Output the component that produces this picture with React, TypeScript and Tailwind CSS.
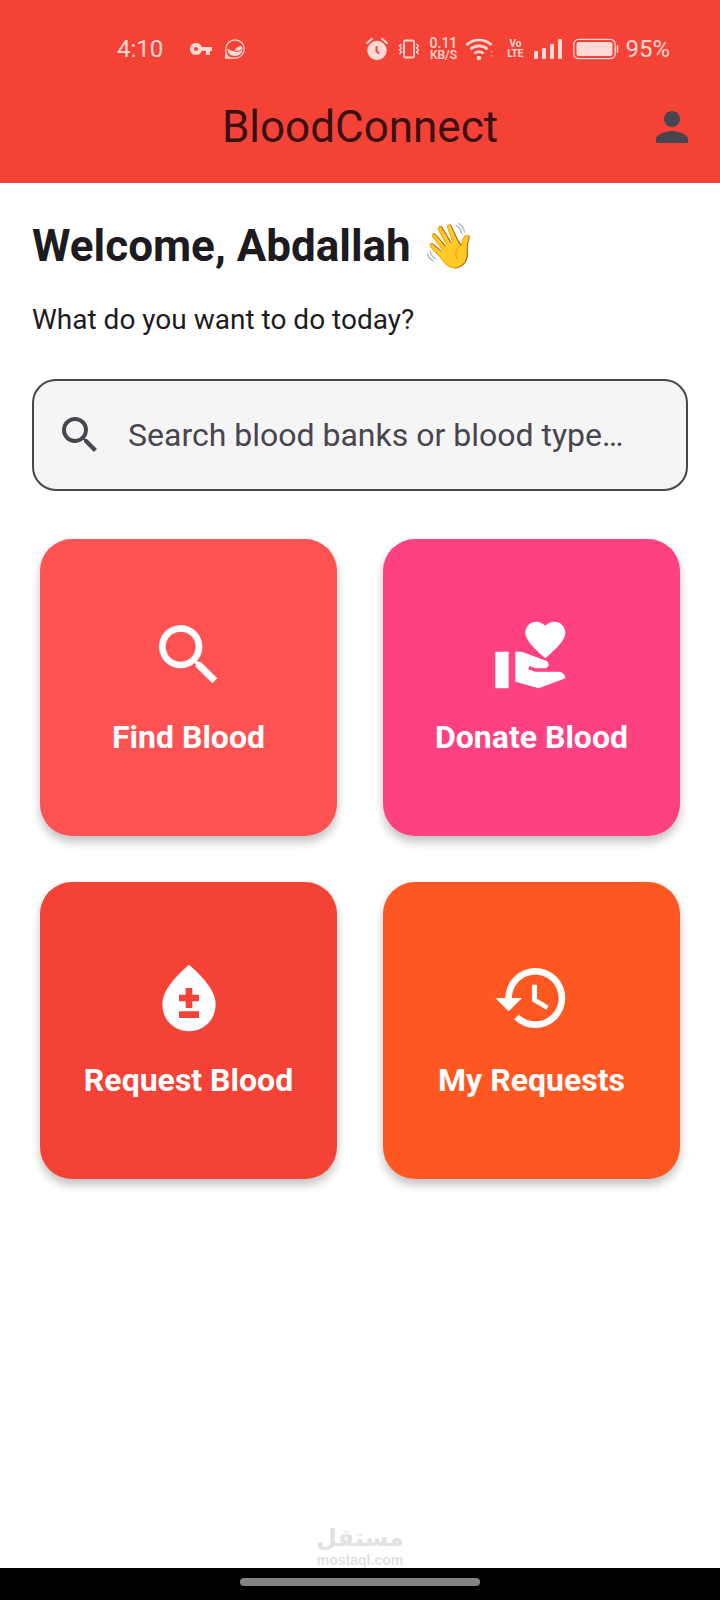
import type { IconType } from "react-icons";
import { MdBloodtype, MdHistory, MdPerson, MdSearch, MdVolunteerActivism, MdVpnKey } from "react-icons/md";

type Action = { label: string; icon: IconType; color: string };

const actions: Action[] = [
  { label: "Find Blood", icon: MdSearch, color: "bg-[#ff5252]" },
  { label: "Donate Blood", icon: MdVolunteerActivism, color: "bg-[#ff4081]" },
  { label: "Request Blood", icon: MdBloodtype, color: "bg-[#f44336]" },
  { label: "My Requests", icon: MdHistory, color: "bg-[#ff5722]" },
];

function ChatBadge() {
  return (
    <svg className="size-5" viewBox="0 0 20 20" fill="none" aria-hidden="true">
      <path d="M.8 19.200V10A9.200 9.200 0 1 1 10 19.200Z" stroke="currentColor" strokeWidth="1.200" />
      <path d="M2.500 9.500c2.500 2.300 5 2.800 7 2.200 1-2.500 4-5.500 7.500-4.200 1.500 5.500-2 9.500-7 9.500s-7.500-3-7.500-7.500Z" fill="currentColor" />
      <path d="M1 12v7h7c-4-.8-6-3-7-7Z" fill="currentColor" />
      <path d="M9 11.800c2.500 1.200 5 1 8-1.300" stroke="#f44336" strokeWidth="1" />
    </svg>
  );
}

function AlarmIcon() {
  return (
    <svg className="h-6 w-[22px]" viewBox="0 0 22 24" fill="none" aria-hidden="true">
      <circle cx="11" cy="13.500" r="9.700" fill="currentColor" />
      <path d="M1.200 6 6 1.800M20.800 6 16 1.800" stroke="currentColor" strokeWidth="2" strokeLinecap="round" />
      <path d="M10.500 10v4l2 2" stroke="#f44336" strokeWidth="2" strokeLinecap="round" />
    </svg>
  );
}

function VibrateIcon() {
  return (
    <svg className="h-5 w-[22px]" viewBox="0 0 22 20" fill="none" stroke="currentColor" aria-hidden="true">
      <rect x="6" y="1.500" width="10" height="17" rx="1.500" strokeWidth="1.800" />
      <path d="m3.500 5-2 2 2 2-2 2 2 2-2 2M18.500 5l2 2-2 2 2 2-2 2 2 2" strokeWidth="1.300" />
    </svg>
  );
}

function WifiIcon() {
  return (
    <svg className="h-6 w-[30px]" viewBox="0 0 30 24" fill="none" stroke="currentColor" aria-hidden="true">
      <path d="M1.500 8a18 18 0 0 1 25 0" strokeWidth="2.600" />
      <path d="M5.500 12.300a12.300 12.300 0 0 1 17 0M9.500 16.500a6.500 6.500 0 0 1 9 0" strokeWidth="2.600" />
      <circle cx="14" cy="21" r="2.300" fill="currentColor" stroke="none" />
      <path d="m24.500 15.500 2-2.500 2 2.500zM24.500 18l2 2.500 2-2.500z" fill="currentColor" stroke="none" opacity=".3" />
    </svg>
  );
}

function SignalIcon() {
  return (
    <svg className="h-5 w-[30px]" viewBox="0 0 30 20" fill="currentColor" aria-hidden="true">
      <rect x="1" y="12" width="4" height="8" rx="1" />
      <rect x="9" y="9" width="4" height="11" rx="1" />
      <rect x="17" y="5" width="4" height="15" rx="1" />
      <rect x="25" y="0" width="4" height="20" rx="1" />
    </svg>
  );
}

function BatteryIcon() {
  return (
    <svg className="h-[22px] w-[46px]" viewBox="0 0 46 22" fill="none" aria-hidden="true">
      <rect x=".8" y="1.300" width="41.400" height="19.400" rx="5" stroke="currentColor" strokeWidth="1.300" />
      <rect x="3.500" y="4" width="36" height="14" rx="2.500" fill="currentColor" />
      <path d="M44.500 8v6" stroke="currentColor" strokeWidth="1.600" strokeLinecap="round" />
    </svg>
  );
}

function StatusBar() {
  return (
    <div className="flex items-center justify-between pt-[37px] pr-[50px] pl-[117px] text-[#ffd9d6]">
      <div className="flex items-center">
        <span className="text-2xl leading-6">4:10</span>
        <MdVpnKey className="ml-[26px] size-6" aria-hidden="true" />
        <span className="ml-3 flex">
          <ChatBadge />
        </span>
      </div>
      <div className="flex items-center">
        <AlarmIcon />
        <span className="ml-2.5 flex">
          <VibrateIcon />
        </span>
        <span className="ml-2.5 flex flex-col items-center font-medium">
          <span className="text-sm leading-3">0.11</span>
          <span className="text-xs leading-3">KB/S</span>
        </span>
        <span className="ml-2 flex">
          <WifiIcon />
        </span>
        <span className="ml-3 flex flex-col items-center text-[10px] leading-[10px] font-bold">
          <span>Vo</span>
          <span>LTE</span>
        </span>
        <span className="ml-2.5 flex">
          <SignalIcon />
        </span>
        <span className="ml-2.5 flex">
          <BatteryIcon />
        </span>
        <span className="ml-1.5 text-2xl leading-6">95%</span>
      </div>
    </div>
  );
}

function ActionCard({ label, icon: Icon, color }: Action) {
  return (
    <button
      type="button"
      className={`flex aspect-square flex-col items-center justify-center gap-5 rounded-[32px] pb-0.5 text-white shadow-[0_6px_10px_rgba(0,0,0,0.24)] ${color}`}
    >
      <Icon className="size-20" aria-hidden="true" />
      <span className="text-[32px] leading-[44px] font-bold">{label}</span>
    </button>
  );
}

export default function App() {
  return (
    <div className="flex min-h-screen flex-col bg-white font-[Roboto,sans-serif] text-[#1d1b20]">
      <header className="bg-[#f44336]">
        <StatusBar />
        <div className="grid grid-cols-[48px_1fr_48px] items-center px-6 pt-[34px] pb-6">
          <h1 className="col-start-2 text-center text-[44px] leading-[64px] text-[#3a1012]">BloodConnect</h1>
          <button type="button" aria-label="Profile" className="text-[#49454f]">
            <MdPerson className="size-12" aria-hidden="true" />
          </button>
        </div>
      </header>

      <main className="flex flex-1 flex-col px-8 pt-8">
        <h2 className="text-[44px] leading-[62px] font-bold">Welcome, Abdallah 👋</h2>
        <p className="mt-[22px] text-[28px] leading-[42px]">What do you want to do today?</p>

        <label className="mt-[38px] flex h-28 items-center gap-6 rounded-3xl border-2 border-[#49454f] bg-[#f5f5f5] px-[22px] text-[#49454f]">
          <MdSearch className="size-12 shrink-0" aria-hidden="true" />
          <input
            type="text"
            aria-label="Search blood banks or blood type"
            placeholder="Search blood banks or blood type…"
            className="min-w-0 flex-1 bg-transparent text-[32px] leading-12 outline-none placeholder:text-[#49454f]"
          />
        </label>

        <div className="mt-12 grid grid-cols-2 gap-[46px] px-2">
          {actions.map((action) => (
            <ActionCard key={action.label} {...action} />
          ))}
        </div>
      </main>

      <footer>
        <div className="flex flex-col items-center text-[#e2e2e2]">
          <span lang="ar" dir="rtl" className="font-['DejaVu_Sans',sans-serif] text-2xl leading-7 font-bold">
            مستقل
          </span>
          <span className="font-['Liberation_Sans',sans-serif] text-sm leading-4 font-bold">mostaql.com</span>
        </div>
        <div className="flex h-8 items-start justify-center bg-black pt-2.5">
          <div className="h-2 w-1/3 rounded-full bg-[#838383]" />
        </div>
      </footer>
    </div>
  );
}
